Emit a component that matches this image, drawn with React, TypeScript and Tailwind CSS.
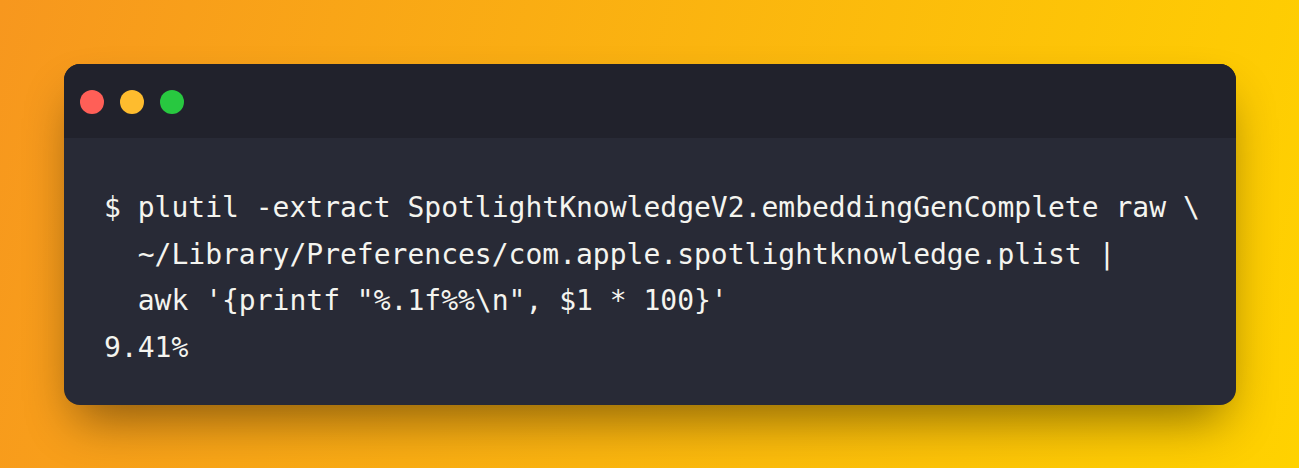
export default function App() {
  const lines = [
    "$ plutil -extract SpotlightKnowledgeV2.embeddingGenComplete raw \\",
    "  ~/Library/Preferences/com.apple.spotlightknowledge.plist |",
    "  awk '{printf \"%.1f%%\\n\", $1 * 100}'",
    "9.41%",
  ];
  return (
    <div className="w-[1299px] h-[468px] bg-[linear-gradient(105deg,#f7971e,#ffd200)] pl-[64px] pr-[63px] pt-[64px]">
      <div className="rounded-[16px] overflow-hidden bg-[#282a36] shadow-[0_25px_50px_-12px_rgba(0,0,0,0.45)]">
        <div className="h-[74px] bg-[#21222c] flex items-center gap-[16px] pl-[16px] pt-[2px]">
          <span className="w-[24px] h-[24px] rounded-full bg-[#ff5f57]" />
          <span className="w-[24px] h-[24px] rounded-full bg-[#febc2e]" />
          <span className="w-[24px] h-[24px] rounded-full bg-[#28c840]" />
        </div>
        <pre className="pt-[47px] pb-[33px] px-[40px] m-0 text-[28px] leading-[46.7px] text-[#f4f4ef] font-['DejaVu_Sans_Mono',monospace] whitespace-pre">
          {lines.join("\n")}
        </pre>
      </div>
    </div>
  );
}
